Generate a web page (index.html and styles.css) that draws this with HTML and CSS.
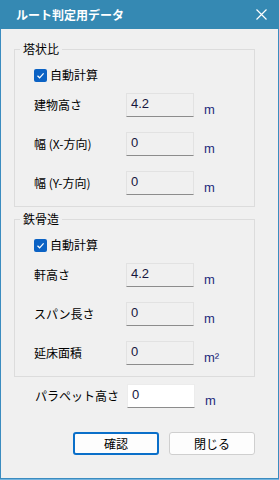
FILE: index.html
```html
<!DOCTYPE html>
<html lang="ja">
  <head>
    <meta charset="UTF-8" />
    <meta name="viewport" content="width=device-width, initial-scale=1.0" />
    <title>ルート判定用データ</title>
    <link rel="stylesheet" href="styles.css">
  </head>
  <body>
    <div class="window">
      <div class="titlebar">
        <span class="title">ルート判定用データ</span>
        <svg class="close" width="11" height="11" viewBox="0 0 11 11">
          <path d="M0.5 0.5 L10.5 10.5 M10.5 0.5 L0.5 10.5" stroke="#fff" stroke-width="1.2" fill="none" />
        </svg>
      </div>

      <div class="content">
        <fieldset class="group">
          <legend>塔状比</legend>
          <div class="inner">
            <label class="check">
              <span class="box">
                <svg width="13" height="13" viewBox="0 0 13 13">
                  <path d="M3.5 6.8 L5.6 8.8 L9.6 4.3" stroke="#fff" stroke-width="1.2" fill="none" />
                </svg>
              </span>
              自動計算
            </label>
            <div class="row first">
              <span class="label">建物高さ</span>
              <div class="field">4.2</div>
              <span class="unit">m</span>
            </div>
            <div class="row">
              <span class="label">幅 (X-方向)</span>
              <div class="field">0</div>
              <span class="unit">m</span>
            </div>
            <div class="row">
              <span class="label">幅 (Y-方向)</span>
              <div class="field">0</div>
              <span class="unit">m</span>
            </div>
          </div>
        </fieldset>

        <fieldset class="group second">
          <legend>鉄骨造</legend>
          <div class="inner">
            <label class="check">
              <span class="box">
                <svg width="13" height="13" viewBox="0 0 13 13">
                  <path d="M3.5 6.8 L5.6 8.8 L9.6 4.3" stroke="#fff" stroke-width="1.2" fill="none" />
                </svg>
              </span>
              自動計算
            </label>
            <div class="row first">
              <span class="label">軒高さ</span>
              <div class="field">4.2</div>
              <span class="unit">m</span>
            </div>
            <div class="row">
              <span class="label">スパン長さ</span>
              <div class="field">0</div>
              <span class="unit">m</span>
            </div>
            <div class="row">
              <span class="label">延床面積</span>
              <div class="field">0</div>
              <span class="unit">m²</span>
            </div>
          </div>
        </fieldset>

        <div class="row parapet">
          <span class="label">パラペット高さ</span>
          <div class="field editable">0</div>
          <span class="unit">m</span>
        </div>

        <div class="actions">
          <button class="btn default">確認</button>
          <button class="btn">閉じる</button>
        </div>
      </div>
    </div>
  </body>
</html>
```

FILE: styles.css
```css
body {
  margin: 0;
  height: 480px;
  background: #74b4de;
  font-family: "Noto Sans CJK JP", sans-serif;
  font-size: 12px;
  color: #000;
}

.window {
  width: 279px;
  height: 479px;
  box-sizing: border-box;
  border: 1px solid #3b8cc0;
  border-top: none;
  background: #f0f0f0;
}

.titlebar {
  height: 29px;
  margin: 0 -1px;
  padding: 0 12px 0 16px;
  display: flex;
  align-items: center;
  justify-content: space-between;
  background: #3589b3;
  color: #fff;
}

.title {
  font-weight: bold;
  font-size: 12px;
  line-height: 16px;
}

.close {
  display: block;
}

.content {
  padding: 0 23px 0 13px;
}

.group {
  margin: 12px 0 0;
  padding: 0 0 11px;
  border: 1px solid #dcdcdc;
}

.group.second {
  margin-top: 4px;
}

legend {
  margin-left: 5px;
  padding: 0 3px;
  font-size: 12px;
  line-height: 16px;
}

.inner {
  padding: 8px 0 0 19px;
}

.check {
  display: flex;
  align-items: center;
  gap: 3px;
  height: 20px;
  line-height: 16px;
}

.box {
  width: 13px;
  height: 13px;
  border-radius: 2px;
  background: #0b62c4;
}

.box svg {
  display: block;
}

.row {
  display: flex;
  align-items: center;
  height: 24px;
  margin-top: 15px;
}

.row.first {
  margin-top: 8px;
}

.label {
  width: 92px;
  line-height: 16px;
}

.field {
  width: 68px;
  height: 24px;
  box-sizing: border-box;
  padding: 1px 4px 0;
  border: 1px solid #e2e2e2;
  border-bottom-color: #8c8c8c;
  background: #f0f0f0;
  font-family: "Liberation Sans", sans-serif;
  font-size: 13px;
  line-height: 18px;
  color: #16163e;
}

.field.editable {
  background: #fff;
  border-color: #ececec;
  border-bottom-color: #8c8c8c;
}

.unit {
  margin-left: 10px;
  padding-top: 8px;
  font-family: "Liberation Sans", sans-serif;
  font-size: 13px;
  color: #1c2a7c;
}

.parapet {
  margin-top: 7px;
  margin-left: 21px;
}

.actions {
  display: flex;
  justify-content: flex-end;
  gap: 10px;
  margin-top: 24px;
}

.btn {
  width: 86px;
  height: 23px;
  padding: 0;
  border: 1px solid #cfcfcf;
  border-radius: 3px;
  background: #fdfdfd;
  font-family: "Noto Sans CJK JP", sans-serif;
  font-size: 12px;
  color: #000;
}

.btn.default {
  border: 2px solid #0a6fc9;
}
```
